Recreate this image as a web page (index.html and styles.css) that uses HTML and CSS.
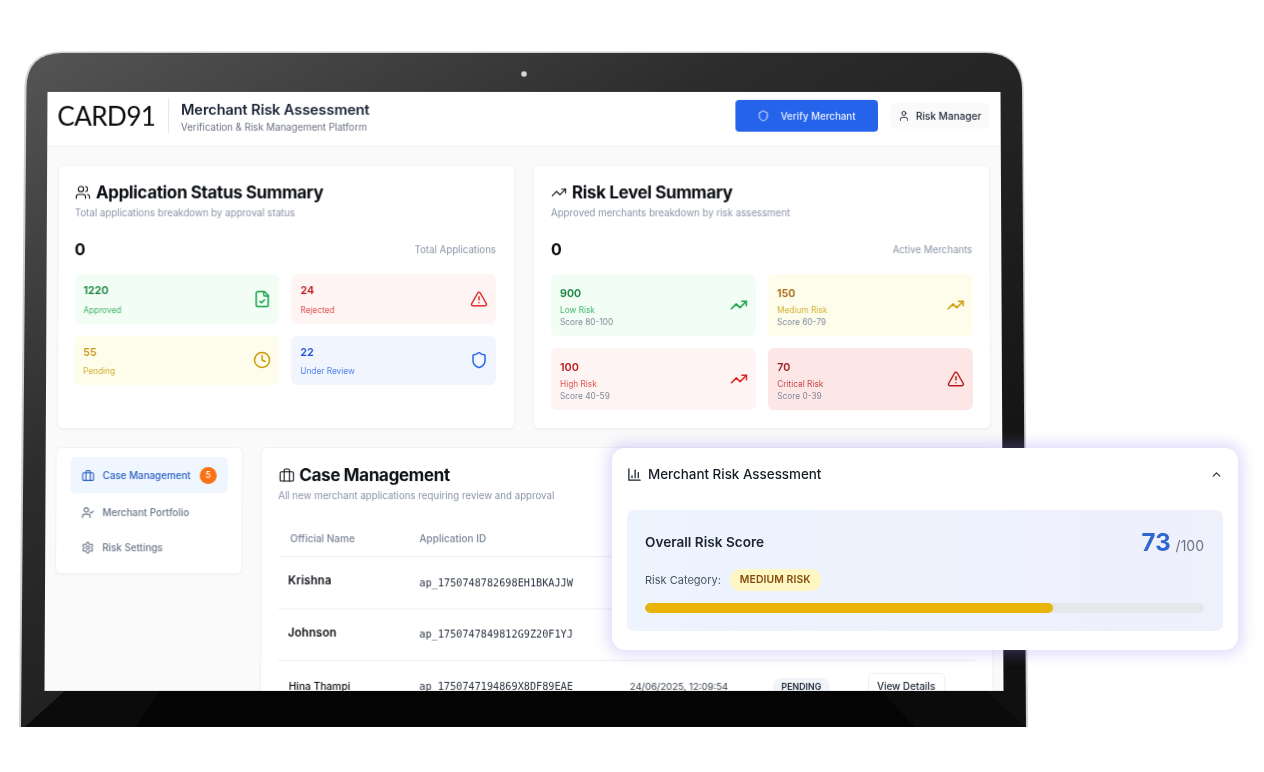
FILE: index.html
```html
<!DOCTYPE html>
<html lang="en">
<head>
<meta charset="utf-8">
<title>Merchant Risk Assessment</title>
<link rel="stylesheet" href="styles.css">
</head>
<body>
<svg class="sprite" width="0" height="0" aria-hidden="true">
  <symbol id="i-users" viewBox="0 0 24 24"><path d="M16 21v-2a4 4 0 0 0-4-4H6a4 4 0 0 0-4 4v2"/><circle cx="9" cy="7" r="4"/><path d="M22 21v-2a4 4 0 0 0-3-3.87"/><path d="M16 3.13a4 4 0 0 1 0 7.75"/></symbol>
  <symbol id="i-trend" viewBox="0 0 24 24"><polyline points="22 7 13.5 15.5 8.5 10.5 2 17"/><polyline points="16 7 22 7 22 13"/></symbol>
  <symbol id="i-file" viewBox="0 0 24 24"><path d="M15 2H6a2 2 0 0 0-2 2v16a2 2 0 0 0 2 2h12a2 2 0 0 0 2-2V7Z"/><path d="M14 2v4a2 2 0 0 0 2 2h4"/><path d="m9 15 2 2 4-4"/></symbol>
  <symbol id="i-alert" viewBox="0 0 24 24"><path d="m21.73 18-8-14a2 2 0 0 0-3.48 0l-8 14A2 2 0 0 0 4 21h16a2 2 0 0 0 1.73-3"/><path d="M12 9v4"/><path d="M12 17h.01"/></symbol>
  <symbol id="i-clock" viewBox="0 0 24 24"><circle cx="12" cy="12" r="10"/><polyline points="12 6 12 12 16 14"/></symbol>
  <symbol id="i-shield" viewBox="0 0 24 24"><path d="M20 13c0 5-3.5 7.5-7.66 8.95a1 1 0 0 1-.67-.01C7.5 20.5 4 18 4 13V6a1 1 0 0 1 1-1c2 0 4.5-1.2 6.24-2.72a1.17 1.17 0 0 1 1.52 0C14.51 3.81 17 5 19 5a1 1 0 0 1 1 1z"/></symbol>
  <symbol id="i-user" viewBox="0 0 24 24"><path d="M19 21v-2a4 4 0 0 0-4-4H9a4 4 0 0 0-4 4v2"/><circle cx="12" cy="7" r="4"/></symbol>
  <symbol id="i-case" viewBox="0 0 24 24"><rect x="2" y="7" width="20" height="14" rx="2"/><path d="M16 21V5a2 2 0 0 0-2-2h-4a2 2 0 0 0-2 2v16"/></symbol>
  <symbol id="i-usercheck" viewBox="0 0 24 24"><path d="M16 21v-2a4 4 0 0 0-4-4H6a4 4 0 0 0-4 4v2"/><circle cx="9" cy="7" r="4"/><polyline points="16 11 18 13 22 9"/></symbol>
  <symbol id="i-gear" viewBox="0 0 24 24"><path d="M12.22 2h-.44a2 2 0 0 0-2 2v.18a2 2 0 0 1-1 1.73l-.43.25a2 2 0 0 1-2 0l-.15-.08a2 2 0 0 0-2.73.73l-.22.38a2 2 0 0 0 .73 2.73l.15.1a2 2 0 0 1 1 1.72v.51a2 2 0 0 1-1 1.74l-.15.09a2 2 0 0 0-.73 2.73l.22.38a2 2 0 0 0 2.73.73l.15-.08a2 2 0 0 1 2 0l.43.25a2 2 0 0 1 1 1.73V20a2 2 0 0 0 2 2h.44a2 2 0 0 0 2-2v-.18a2 2 0 0 1 1-1.73l.43-.25a2 2 0 0 1 2 0l.15.08a2 2 0 0 0 2.73-.73l.22-.39a2 2 0 0 0-.73-2.73l-.15-.08a2 2 0 0 1-1-1.74v-.5a2 2 0 0 1 1-1.74l.15-.09a2 2 0 0 0 .73-2.73l-.22-.38a2 2 0 0 0-2.73-.73l-.15.08a2 2 0 0 1-2 0l-.43-.25a2 2 0 0 1-1-1.73V4a2 2 0 0 0-2-2z"/><circle cx="12" cy="12" r="3"/></symbol>
  <symbol id="i-bars" viewBox="0 0 24 24"><path d="M3 3v18h18"/><path d="M18 17V9"/><path d="M13 17V5"/><path d="M8 17v-3"/></symbol>
  <symbol id="i-up" viewBox="0 0 24 24"><path d="m18 15-6-6-6 6"/></symbol>
</svg>

<div class="stage">
  <svg class="frame" viewBox="0 0 1264 772" width="1264" height="772" aria-hidden="true">
    <defs>
      <linearGradient id="bezel" x1="0" y1="0" x2="0.8" y2="0.9">
        <stop offset="0" stop-color="#555555"/>
        <stop offset="0.4" stop-color="#2c2c2c"/>
        <stop offset="1" stop-color="#101010"/>
      </linearGradient>
    </defs>
    <path class="frame-edge" d="M19 727 L24.5 88 Q25 52 62 51.5 L985 51.5 Q1022 52 1023.5 88 L1028 727 Z"/>
    <path fill="url(#bezel)" d="M21 727 L26.5 88 Q27 53.5 62 53 L985 53 Q1020.5 53.5 1022 88 L1026 727 Z"/>
    <path fill="#040404" d="M25 727 L66 690 L985 690 L1024 727 Z"/>
    <path fill="#0b0b0b" d="M25 727 L66 690 L160 690 L136 727 Z"/>
    <path fill="#0b0b0b" d="M1024 727 L985 690 L880 690 L915 727 Z"/>
    <circle class="camera" cx="524" cy="74" r="3"/>
  </svg>

  <div class="screen">
    <header class="topbar">
      <div class="brand">
        <span class="logo">CARD91</span>
        <div class="brand-text">
          <h1>Merchant Risk Assessment</h1>
          <p>Verification &amp; Risk Management Platform</p>
        </div>
      </div>
      <div class="top-actions">
        <button class="verify"><svg class="ico ico-12"><use href="#i-shield"/></svg>Verify Merchant</button>
        <div class="role"><svg class="ico ico-12"><use href="#i-user"/></svg>Risk Manager</div>
      </div>
    </header>

    <main class="content">
      <section class="summaries">
        <article class="card summary">
          <h2><svg class="ico ico-16"><use href="#i-users"/></svg>Application Status Summary</h2>
          <p class="sub">Total applications breakdown by approval status</p>
          <div class="total"><strong>0</strong><span>Total Applications</span></div>
          <div class="tiles">
            <div class="tile green"><div><b>1220</b><span>Approved</span></div><svg class="ico ico-18"><use href="#i-file"/></svg></div>
            <div class="tile red"><div><b>24</b><span>Rejected</span></div><svg class="ico ico-18"><use href="#i-alert"/></svg></div>
            <div class="tile yellow"><div><b>55</b><span>Pending</span></div><svg class="ico ico-18"><use href="#i-clock"/></svg></div>
            <div class="tile blue"><div><b>22</b><span>Under Review</span></div><svg class="ico ico-18"><use href="#i-shield"/></svg></div>
          </div>
        </article>
        <article class="card summary">
          <h2><svg class="ico ico-16"><use href="#i-trend"/></svg>Risk Level Summary</h2>
          <p class="sub">Approved merchants breakdown by risk assessment</p>
          <div class="total"><strong>0</strong><span>Active Merchants</span></div>
          <div class="tiles risk">
            <div class="tile green"><div><b>900</b><span>Low Risk</span><small>Score 80-100</small></div><svg class="ico ico-18"><use href="#i-trend"/></svg></div>
            <div class="tile yellow dark"><div><b>150</b><span>Medium Risk</span><small>Score 60-79</small></div><svg class="ico ico-18"><use href="#i-trend"/></svg></div>
            <div class="tile red"><div><b>100</b><span>High Risk</span><small>Score 40-59</small></div><svg class="ico ico-18"><use href="#i-trend"/></svg></div>
            <div class="tile critical"><div><b>70</b><span>Critical Risk</span><small>Score 0-39</small></div><svg class="ico ico-18"><use href="#i-alert"/></svg></div>
          </div>
        </article>
      </section>

      <section class="workspace">
        <nav class="card side">
          <a class="nav active"><svg class="ico ico-13"><use href="#i-case"/></svg><span>Case Management</span><em>5</em></a>
          <a class="nav"><svg class="ico ico-13"><use href="#i-usercheck"/></svg><span>Merchant Portfolio</span></a>
          <a class="nav"><svg class="ico ico-13"><use href="#i-gear"/></svg><span>Risk Settings</span></a>
        </nav>
        <article class="card cases">
          <h2><svg class="ico ico-16"><use href="#i-case"/></svg>Case Management</h2>
          <p class="sub">All new merchant applications requiring review and approval</p>
          <table>
            <thead>
              <tr><th>Official Name</th><th>Application ID</th><th></th><th></th><th></th></tr>
            </thead>
            <tbody>
              <tr><td class="name">Krishna</td><td class="mono">ap_1750748782698EH1BKAJJW</td><td></td><td></td><td></td></tr>
              <tr><td class="name">Johnson</td><td class="mono">ap_1750747849812G9Z20F1YJ</td><td></td><td></td><td></td></tr>
              <tr><td class="name plain">Hina Thampi</td><td class="mono">ap_1750747194869X8DF89EAE</td><td>24/06/2025, 12:09:54</td><td><span class="state">PENDING</span></td><td><button class="details">View Details</button></td></tr>
            </tbody>
          </table>
        </article>
      </section>
    </main>
  </div>

  <aside class="popup">
    <div class="popup-head">
      <div class="popup-title"><svg class="ico ico-15"><use href="#i-bars"/></svg>Merchant Risk Assessment</div>
      <svg class="ico ico-13"><use href="#i-up"/></svg>
    </div>
    <div class="score-panel">
      <div class="score-row">
        <span class="score-label">Overall Risk Score</span>
        <span class="score-value"><b>73</b> /100</span>
      </div>
      <div class="category"><span>Risk Category:</span><span class="pill">MEDIUM RISK</span></div>
      <div class="track"><div class="fill" style="width:73%"></div></div>
    </div>
  </aside>
</div>
</body>
</html>
```

FILE: styles.css
```css
* { box-sizing: border-box; }
html, body { margin: 0; padding: 0; background: #fff; }
body { font-family: Inter, "Liberation Sans", sans-serif; color: #111827; overflow: hidden; }
h1, h2, p { margin: 0; }

.sprite { position: absolute; }
.stage { position: relative; width: 1264px; height: 772px; overflow: hidden; background: #fff; }

.frame { position: absolute; left: 0; top: 0; }
.frame-edge { fill: #cfcfcf; }
.camera { fill: #d8d8d8; stroke: #555; stroke-width: .6; }

.ico { fill: none; stroke: currentColor; stroke-width: 2; stroke-linecap: round; stroke-linejoin: round; flex: none; display: block; }
.ico-12 { width: 12px; height: 12px; }
.ico-13 { width: 13px; height: 13px; }
.ico-15 { width: 15px; height: 15px; }
.ico-16 { width: 16px; height: 16px; stroke-width: 1.6; }
.ico-18 { width: 18px; height: 18px; }

/* the photographed laptop screen, tilted very slightly */
.screen {
  position: absolute;
  left: 45.5px;
  top: 91px;
  width: 956px;
  height: 599px;
  overflow: hidden;
  background: #fafafa;
  transform: perspective(1000px) rotateX(.6deg);
  transform-origin: 50% 300px;
  filter: blur(.35px);
}

.topbar {
  height: 55px;
  background: #fff;
  border-bottom: 1px solid #eeeff1;
  display: flex;
  align-items: center;
  justify-content: space-between;
  padding: 0 11px 6px 10px;
}
.brand { display: flex; align-items: center; }
.logo {
  font-family: Lato, sans-serif;
  font-size: 26.2px;
  font-weight: 400;
  letter-spacing: -.6px;
  color: #0b0b0b;
  width: 112px;
  height: 36px;
  line-height: 36px;
  border-right: 1px solid #e8e8e8;
  white-space: nowrap;
}
.brand-text { margin: 2px 0 0 12px; }
.brand-text h1 { font-size: 14.6px; line-height: 20px; font-weight: 600; letter-spacing: -.1px; color: #1a2433; }
.brand-text p { font-size: 9.7px; line-height: 14px; margin-top: 1px; color: #6b7280; }

.top-actions { display: flex; align-items: center; gap: 12px; }
.verify {
  width: 143px;
  height: 32px;
  border: 0;
  border-radius: 4px;
  background: #2563eb;
  color: #e8efff;
  font: 500 9.8px Inter, sans-serif;
  display: flex;
  align-items: center;
  justify-content: center;
  gap: 11px;
}
.role {
  width: 100px;
  height: 26px;
  border-radius: 5px;
  background: #fafafa;
  color: #222b38;
  font-size: 10.1px;
  font-weight: 500;
  display: flex;
  align-items: center;
  padding-left: 8px;
  gap: 6px;
}

.content { padding: 18px 11px 0; display: flex; flex-direction: column; gap: 18px; }

.card { background: #fff; border: 1px solid #f1f2f4; border-radius: 6px; box-shadow: 0 1px 2px rgba(0,0,0,.035); }
.card h2 { display: flex; align-items: center; gap: 5px; font-size: 17px; line-height: 24px; font-weight: 700; letter-spacing: -.35px; color: #0c0f14; }
.sub { font-size: 9.7px; line-height: 14px; margin-top: 2px; color: #8a94a6; }

.summaries { display: grid; grid-template-columns: 458px 458px; gap: 18px; }
.summary { height: 265px; padding: 15px 17px 0 17px; }
.summary:first-child { padding: 15px 18px 0 16px; }
.total { display: flex; justify-content: space-between; align-items: center; height: 20px; margin-top: 19px; }
.total strong { font-size: 16px; font-weight: 700; color: #0c0f14; }
.total span { font-size: 9.7px; color: #8a94a6; }

.tiles { display: grid; grid-template-columns: 1fr 1fr; gap: 12px 12.5px; margin-top: 15px; }
.tile { display: flex; align-items: center; justify-content: space-between; border-radius: 6px; padding: 10px 8px 8px 9px; }
.tile div { display: flex; flex-direction: column; }
.tile .ico { margin-top: -2px; }
.tile b { font-size: 10.8px; line-height: 14px; font-weight: 600; }
.tile span { font-size: 8.3px; line-height: 12px; margin-top: 5.5px; opacity: .8; }
.tile small { font-size: 8.3px; line-height: 12px; color: #7f8899; }
.risk .tile { padding-top: 13px; padding-bottom: 8.5px; }
.risk .tile span { margin-top: 2.5px; }
.risk .tile .ico { margin-top: -4.5px; }

.green { background: #f2fdf5; color: #16a34a; }
.green b { color: #15803d; }
.red { background: #fef4f4; color: #dc2626; }
.red b { color: #b91c1c; }
.yellow { background: #fefdec; color: #ca9a04; }
.yellow b { color: #c8981a; }
.yellow.dark b { color: #a16207; }
.blue { background: #f1f6fe; color: #2563eb; }
.blue b { color: #1d4ed8; }
.critical { background: #fde6e6; color: #b91c1c; }
.critical b { color: #991b1b; }

.workspace { display: grid; grid-template-columns: 187px 731px; gap: 18px; align-items: start; margin-left: -1.5px; }
.side { padding: 9px 14px 8px; display: flex; flex-direction: column; height: 127px; }
.nav {
  display: flex;
  align-items: center;
  height: 36px;
  padding: 1px 12px 0 11px;
  gap: 8.5px;
  border-radius: 5px;
  font-size: 9.8px;
  font-weight: 500;
  color: #6b7688;
}
.nav.active { background: #eff6ff; color: #2b5fc0; margin-bottom: 1px; }
.nav span { white-space: nowrap; }
.nav em {
  font-style: normal;
  margin-left: .5px;
  width: 17px;
  height: 17px;
  flex: none;
  border-radius: 50%;
  background: #f97316;
  color: #fff;
  font-size: 8.5px;
  display: flex;
  align-items: center;
  justify-content: center;
}

.cases { height: 260px; padding: 15px 19px 0 17px; }
.cases table { width: 695px; border-collapse: collapse; table-layout: fixed; margin-top: 17.5px; }
.cases th:nth-child(1) { width: 129px; }
.cases th:nth-child(2) { width: 210px; }
.cases th:nth-child(3) { width: 142px; }
.cases th:nth-child(4) { width: 95px; }
th { height: 36px; text-align: left; padding: 0 12px; font-size: 10px; font-weight: 500; color: #7a8596; border-bottom: 1px solid #eceef1; }
td { height: 51.5px; padding: 0 12px; font-size: 9.5px; color: #333b48; border-bottom: 1px solid #eceef1; white-space: nowrap; }
.name { font-size: 11.4px; font-weight: 600; color: #0c0f14; padding-left: 10px; letter-spacing: .15px; padding-bottom: 4px; }
.name.plain { font-size: 10.2px; font-weight: 500; letter-spacing: 0; padding-bottom: 0; padding-left: 11px; }
.mono { font-family: "DejaVu Sans Mono", monospace; font-size: 10.2px; color: #2b3340; }
.state { display: inline-block; padding: 3px 9px; border-radius: 10px; background: #f1f5f9; font-size: 8.8px; font-weight: 600; color: #1e2835; }
.details { height: 26px; width: 77px; background: #fff; border: 1px solid #eceef1; border-radius: 5px; font: 500 9.9px Inter, sans-serif; color: #222b38; padding: 0; }

/* floating panel over the laptop */
.popup {
  position: absolute;
  left: 612px;
  top: 448px;
  width: 626px;
  height: 202px;
  background: #fff;
  border-radius: 13px;
  box-shadow: 0 0 14px 5px rgba(145,125,240,.27);
  padding: 0 15px;
}
.popup-head { height: 52px; margin-bottom: 10px; display: flex; align-items: center; justify-content: space-between; padding-right: .5px; color: #1f2937; }
.popup-title { display: flex; align-items: center; gap: 6px; font-size: 13.4px; font-weight: 500; color: #161c26; }
.score-panel { height: 121px; border-radius: 7px; background: linear-gradient(90deg, #edf4fe, #eef0fc); padding: 17px 19px 0 18px; }
.score-row { display: flex; align-items: center; justify-content: space-between; height: 30px; }
.score-label { font-size: 13.6px; font-weight: 600; color: #1b2330; }
.score-value { font-size: 14px; color: #6b7280; }
.score-value b { font-size: 24px; font-weight: 700; color: #2f66d0; margin-right: 1px; }
.category { display: flex; align-items: center; gap: 9px; margin-top: 12px; font-size: 11px; color: #4b5563; }
.pill { height: 22px; padding: 0 10px; border-radius: 11px; background: #fef7c3; color: #854d0e; font-size: 10.4px; font-weight: 600; line-height: 22px; letter-spacing: .1px; }
.track { height: 10px; border-radius: 5px; background: #e5e7eb; margin-top: 12px; overflow: hidden; }
.fill { height: 100%; border-radius: 5px; background: #eab308; }
```
